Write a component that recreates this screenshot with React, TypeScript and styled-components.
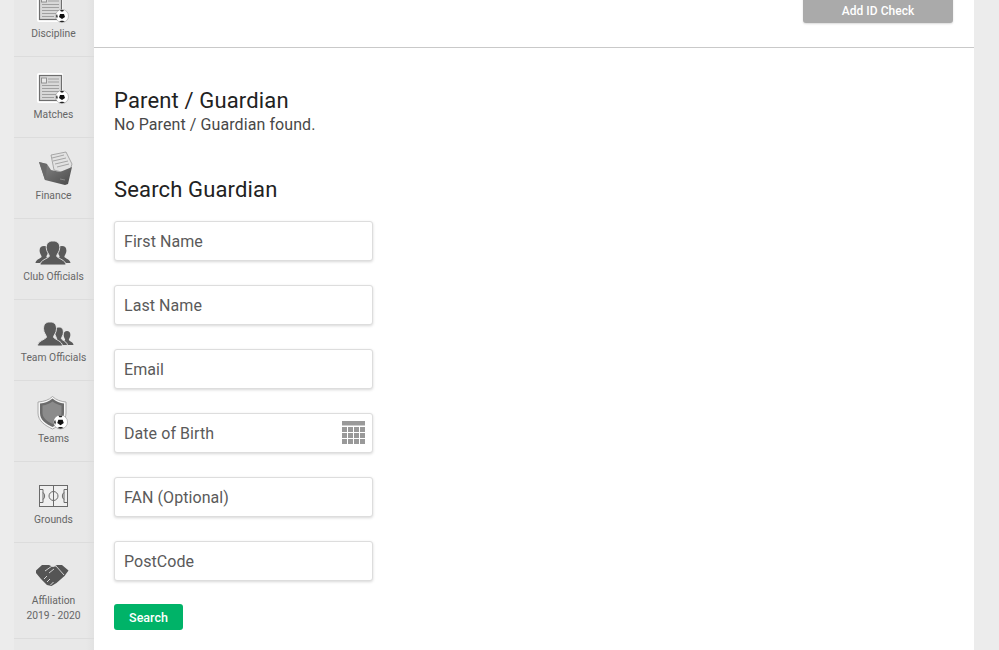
import React from "react";
import styled, { createGlobalStyle } from "styled-components";

const Global = createGlobalStyle`
  html, body { margin: 0; padding: 0; height: 650px; overflow: hidden; background: #ececec; }
  body { font-family: Roboto, "Liberation Sans", sans-serif; }
  * { box-sizing: border-box; }
`;

const Page = styled.div`
  display: flex;
  width: 999px;
  height: 650px;
  padding: 0 25px 0 14px;
  overflow: hidden;
  background: #ececec;
`;

const Sidebar = styled.nav`
  flex: 0 0 80px;
  display: flex;
  flex-direction: column;
  margin-top: -24px;
  height: 674px;
  background: linear-gradient(to right, #e8e8e8 0, #e8e8e8 72px, #e2e2e2 80px);
`;

const NavItem = styled.a<{ $tall?: boolean }>`
  flex: 0 0 ${(p) => (p.$tall ? 96 : 81)}px;
  display: flex;
  flex-direction: column;
  align-items: center;
  padding: 12px 1px 0 0;
  border-bottom: 1px solid #dcdcdc;
  color: #666;
  font-size: 10.3px;
  line-height: 15px;
  text-align: center;
`;

const IconSlot = styled.div`
  width: 40px;
  height: 38px;
  margin-left: 1px;
  flex: none;
  display: flex;
`;

const Main = styled.main`
  flex: 1;
  background: #fff;
  display: flex;
  flex-direction: column;
`;

const TopBar = styled.div`
  height: 48px;
  border-bottom: 1px solid #c9c9c9;
  display: flex;
  justify-content: flex-end;
  align-items: flex-end;
  padding: 0 21px 24px 0;
`;

const GreyButton = styled.button`
  width: 150px;
  height: 26px;
  border: 0;
  border-radius: 0 0 3px 3px;
  background: #aaa;
  color: #fff;
  font: 500 12px Roboto, sans-serif;
  letter-spacing: 0.03px;
  box-shadow: 0 1px 2px rgba(0, 0, 0, 0.15);
  padding: 2px 0 0;
`;

const Content = styled.section`
  padding: 40px 20px 0;
  display: flex;
  flex-direction: column;
`;

const Title = styled.h2`
  margin: 0;
  font-size: 22px;
  font-weight: 400;
  line-height: 26px;
  letter-spacing: 0.15px;
  color: #222;
`;

const Note = styled.p`
  margin: 0 0 41px;
  font-size: 16px;
  line-height: 22px;
  letter-spacing: 0.08px;
  color: #484848;
`;

const Form = styled.form`
  margin-top: 18px;
  display: flex;
  flex-direction: column;
  gap: 24px;
  width: 259px;
`;

const Field = styled.div`
  position: relative;
  height: 40px;
`;

const TextInput = styled.input`
  width: 100%;
  height: 100%;
  padding: 0 9px;
  border: 1px solid #ddd;
  border-radius: 3px;
  box-shadow: 0 1px 3px rgba(0, 0, 0, 0.16);
  font: 400 16px Roboto, sans-serif;
  letter-spacing: 0.06px;
  color: #5a5a5a;
  background: #fff;
  outline: none;
  &::placeholder { color: #5a5a5a; opacity: 1; }
`;

const CalendarIcon = styled.svg`
  position: absolute;
  right: 8px;
  top: 8px;
`;

const SearchButton = styled.button`
  width: 69px;
  height: 26px;
  margin-top: -1px;
  border: 0;
  border-radius: 3px;
  background: #00b368;
  color: #fff;
  font: 500 12.5px Roboto, sans-serif;
  padding: 1px 0 0;
`;

const Ball = ({ x, y, r = 6.5 }: { x: number; y: number; r?: number }) => (
  <g transform={`translate(${x} ${y}) scale(${r / 6.5})`}>
    <circle r={6.5} fill="#fff" stroke="#777" strokeWidth={0.4} />
    <path d="M-2 -2L2 -2L3 1L0 3L-3 1Z" fill="#111" />
    <path d="M-2 -6L2 -6L1 -4.500L-1 -4.500Z M-6 0L-5 -2L-4.300 0.500L-5 2.500Z M-3 5.500L-1 4.700L1 4.700L3 5.500L0 6.300Z" fill="#222" />
  </g>
);

const Svg = styled.svg.attrs({ width: 40, height: 38, viewBox: "0 0 40 38" })``;

const DocIcon = () => (
  <Svg>
    <rect x="3" y="4" width="26" height="30" rx="2" fill="#fff" />
    <rect x="5.500" y="6.500" width="22" height="25" fill="#d8d8d8" stroke="#6e6e6e" strokeWidth="1.200" />
    <rect x="7.500" y="9" width="5" height="5" fill="#e8e8e8" stroke="#8a8a8a" strokeWidth="0.900" />
    <path d="M14 10h11M14 13h11M8 16.500h17M8 19.500h17M8 22.500h17M8 25.500h14M8 28.500h12" stroke="#a0a0a0" strokeWidth="1" />
    <Ball x={28} y={28} />
  </Svg>
);

const FolderIcon = () => (
  <Svg>
    <defs>
      <linearGradient id="folderFront" x1="0" y1="0" x2="1" y2="1">
        <stop offset="0" stopColor="#8a8a8a" />
        <stop offset="1" stopColor="#4a4a4a" />
      </linearGradient>
    </defs>
    <path d="M17 5 L32 2 L38 14 L35 24 L20 20Z" fill="#e2e2e2" stroke="#8c8c8c" strokeWidth="0.700" />
    <path d="M18 8l12-3M19 11l13-3M21 14l13-3M23 17l12-3" stroke="#a5a5a5" strokeWidth="1" />
    <path d="M5 12 L13 14 L17 20 L26 22 L38 17 L34 34 L31 35 L11 30 Z" fill="url(#folderFront)" />
    <path d="M5 12 L13 14 L12 27 L11 30Z" fill="#6a6a6a" />
    <path d="M26 29l5 1" stroke="#888" strokeWidth="1" />
  </Svg>
);

const Person = ({ cx, top, w, base, stroke }: { cx: number; top: number; w: number; base: number; stroke?: boolean }) => {
  const head = w * 0.26;
  const h = base - top;
  return (
    <path
      d={`M${cx - w / 2} ${base}
        C${cx - w / 2} ${base - h * 0.2} ${cx - w * 0.2} ${base - h * 0.27} ${cx - w * 0.14} ${base - h * 0.36}
        C${cx - w * 0.14} ${base - h * 0.45} ${cx - head} ${base - h * 0.55} ${cx - head} ${top + h * 0.28}
        C${cx - head} ${top + h * 0.08} ${cx - head * 0.6} ${top} ${cx} ${top}
        C${cx + head * 0.6} ${top} ${cx + head} ${top + h * 0.08} ${cx + head} ${top + h * 0.28}
        C${cx + head} ${base - h * 0.55} ${cx + w * 0.14} ${base - h * 0.45} ${cx + w * 0.14} ${base - h * 0.36}
        C${cx + w * 0.2} ${base - h * 0.27} ${cx + w / 2} ${base - h * 0.2} ${cx + w / 2} ${base}Z`}
      fill="#5a5a5a"
      stroke={stroke ? "#e8e8e8" : "none"}
      strokeWidth={stroke ? 0.9 : 0}
    />
  );
};

const ClubIcon = () => (
  <Svg>
    <Person cx={10} top={15} w={17} base={32} />
    <Person cx={28} top={15} w={17} base={32} />
    <Person cx={19} top={10} w={26} base={34} stroke />
  </Svg>
);

const TeamIcon = () => (
  <Svg>
    <Person cx={33} top={19} w={13} base={33} />
    <Person cx={25} top={15} w={17} base={33.500} stroke />
    <Person cx={16} top={10} w={25} base={34} stroke />
  </Svg>
);

const ShieldIcon = () => (
  <Svg>
    <path d="M18.500 3.500 C22 7 27 8.500 32 9 V20 C32 28 26 32.500 18.500 36 C11 32.500 4 28 4 20 V9 C10 8.500 15 7 18.500 3.500Z" fill="#f6f6f6" stroke="#999" strokeWidth="0.800" />
    <path d="M18.500 5.500 C22 8.500 26 10 30 10.500 V20 C30 27 25 31 18.500 34 C12 31 6 27 6 20 V10.500 C11 10 15 8.500 18.500 5.500Z" fill="#6b6b6b" />
    <path d="M18.500 8.500 C21.500 10.500 24.500 12 27.500 12.500 V20 C27.500 25 23.500 28.500 18.500 31 C13.500 28.500 8.500 25 8.500 20 V12.500 C12.500 12 15.500 10.500 18.500 8.500Z" fill="#8b8b8b" />
    <Ball x={26.500} y={29} r={7} />
  </Svg>
);

const PitchIcon = () => (
  <Svg>
    <rect x="5.500" y="11.500" width="28" height="21" fill="#efefef" stroke="#6a6a6a" />
    <path d="M19.500 11.500v21M5.500 15.500h3.500v13h-3.500M33.500 15.500h-3.500v13h3.500" fill="none" stroke="#6a6a6a" />
    <circle cx="19.500" cy="22" r="4.500" fill="none" stroke="#6a6a6a" />
    <path d="M9 18.500a4.500 4.500 0 0 1 0 7M30 18.500a4.500 4.500 0 0 0 0 7" fill="none" stroke="#6a6a6a" />
  </Svg>
);

const ShakeIcon = () => (
  <Svg>
    <path d="M2 15.500 L8 10 H15 L19 12 L23 10 H28 L34.500 15.500 L30.500 21 L22.500 28 L17.500 31 L13 30 L7 24 L2 18Z" fill="#555" />
    <path d="M11 16 L18 11 H22 L30 20 M15 18 L20 14" fill="none" stroke="#e0e0e0" strokeWidth="0.900" />
    <path d="M10 24l3-3M13 27l3-3M16.500 30l3-3" stroke="#e8e8e8" strokeWidth="0.900" />
  </Svg>
);

const navItems = [
  { label: "Discipline", icon: <DocIcon /> },
  { label: "Matches", icon: <DocIcon /> },
  { label: "Finance", icon: <FolderIcon /> },
  { label: "Club Officials", icon: <ClubIcon /> },
  { label: "Team Officials", icon: <TeamIcon /> },
  { label: "Teams", icon: <ShieldIcon /> },
  { label: "Grounds", icon: <PitchIcon /> },
];

const fields = ["First Name", "Last Name", "Email", "Date of Birth", "FAN (Optional)", "PostCode"];

const cells: number[][] = [];
for (let r = 0; r < 3; r++) for (let c = 0; c < 4; c++) cells.push([c * 6, 6 + r * 6]);

export default function App() {
  return (
    <>
      <Global />
      <Page>
        <Sidebar>
          {navItems.map((n) => (
            <NavItem key={n.label}>
              <IconSlot>{n.icon}</IconSlot>
              {n.label}
            </NavItem>
          ))}
          <NavItem $tall>
            <IconSlot><ShakeIcon /></IconSlot>
            Affiliation
            <br />
            2019 - 2020
          </NavItem>
        </Sidebar>
        <Main>
          <TopBar>
            <GreyButton>Add ID Check</GreyButton>
          </TopBar>
          <Content>
            <Title>Parent / Guardian</Title>
            <Note>No Parent / Guardian found.</Note>
            <Title>Search Guardian</Title>
            <Form onSubmit={(e) => e.preventDefault()}>
              {fields.map((f) => (
                <Field key={f}>
                  <TextInput placeholder={f} />
                  {f === "Date of Birth" && (
                    <CalendarIcon width="23" height="23" viewBox="0 0 23 23">
                      <rect width="23" height="4.500" fill="#999" />
                      {cells.map(([x, y]) => (
                        <rect key={`${x}-${y}`} x={x} y={y} width="5" height="5" fill="#999" />
                      ))}
                    </CalendarIcon>
                  )}
                </Field>
              ))}
              <SearchButton>Search</SearchButton>
            </Form>
          </Content>
        </Main>
      </Page>
    </>
  );
}
